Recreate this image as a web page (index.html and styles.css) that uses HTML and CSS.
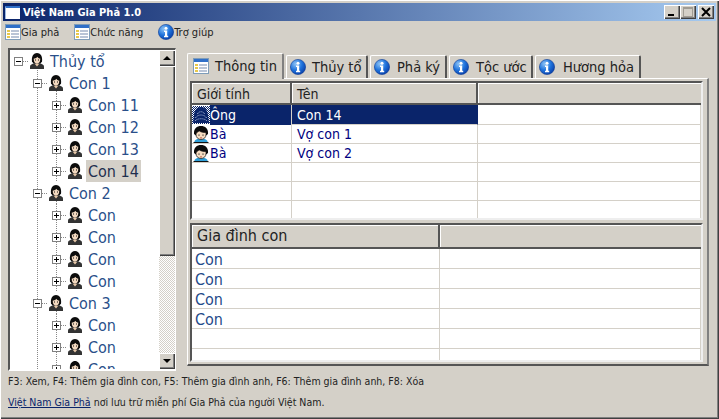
FILE: index.html
```html
<!DOCTYPE html>
<html lang="vi">
<head>
<meta charset="utf-8">
<title>Việt Nam Gia Phả 1.0</title>
<link rel="stylesheet" href="styles.css">
</head>
<body>
<svg class="defs" aria-hidden="true">
  <defs>
    <radialGradient id="ig" cx="35%" cy="30%" r="75%">
      <stop offset="0" stop-color="#8fc4f5"/><stop offset="0.55" stop-color="#1f73dc"/><stop offset="1" stop-color="#0a3fa8"/>
    </radialGradient>
    <symbol id="form" viewBox="0 0 16 16">
      <rect x="0.5" y="0.5" width="15" height="15" fill="#fff" stroke="#7f9db9"/>
      <rect x="1" y="1" width="14" height="3" fill="#2f6fc8"/>
      <rect x="2" y="6" width="3" height="2" fill="#e8c84a"/><rect x="2" y="9" width="3" height="2" fill="#e8c84a"/><rect x="2" y="12" width="3" height="2" fill="#e8c84a"/>
      <rect x="6" y="6" width="8" height="2" fill="#b9c4d6"/><rect x="6" y="9" width="8" height="2" fill="#b9c4d6"/><rect x="6" y="12" width="8" height="2" fill="#b9c4d6"/>
    </symbol>
    <symbol id="info" viewBox="0 0 16 16">
      <circle cx="8" cy="8" r="7.6" fill="url(#ig)" stroke="#0b3a96" stroke-width="0.6"/>
      <circle cx="8" cy="4.2" r="1.5" fill="#fff"/>
      <path d="M6 6.6h3.2v5.2h1v1.4H6v-1.4h1V8H6z" fill="#fff"/>
    </symbol>
    <symbol id="man" viewBox="0 0 16 16">
      <path d="M1 16v-2.500c0-1.800 2.200-2.600 4.500-3.200h5c2.300 .6 4.500 1.400 4.500 3.200V16z" fill="#333"/>
      <path d="M5.500 10.500h5L8 13.500z" fill="#e8c8a8"/>
      <path d="M3 8.500C2.200 2.800 5 0 8 0s5.800 2.800 5 8.500l-1.500 2H4.500z" fill="#0c0c0c"/>
      <path d="M4.800 5.500c1.600 0 3-.7 3.600-1.800 .5 1.200 1.500 1.800 2.800 1.800 .3 3-1.200 5.200-3.200 5.200S4.500 8.500 4.800 5.500z" fill="#f3d9c0"/>
      <rect x="6" y="6.500" width="1" height="1" fill="#111"/><rect x="9" y="6.500" width="1" height="1" fill="#111"/>
    </symbol>
    <symbol id="woman" viewBox="0 0 18 18">
      <path d="M2.500 18v-1.500c0-1.400 2.200-2.400 4.500-2.700h4c2.300 .3 4.500 1.300 4.500 2.700V18z" fill="#2f9fd8"/>
      <path d="M1.500 17.500h15" stroke="#111" stroke-width="1"/>
      <path d="M2 9C1.500 3.500 5 1 9 1s7.500 2.500 7 8l-2 1.500H4z" fill="#0c0c0c"/>
      <path d="M4 9.500c0-2 2-3 3.500-3.500 1.500 1.200 4 1.500 6.500 1.500v2c0 3-2.200 5-5 5s-5-2-5-5z" fill="#f6dcc0" stroke="#111" stroke-width="0.7"/>
      <rect x="6.500" y="9.500" width="1" height="1.200" fill="#111"/><rect x="10.500" y="9.500" width="1" height="1.200" fill="#111"/>
      <rect x="8" y="12.500" width="2" height="0.800" fill="#b04030"/>
    </symbol>
    <pattern id="dith" width="2" height="2" patternUnits="userSpaceOnUse">
      <rect width="2" height="2" fill="#0a246a"/><rect width="1" height="1" fill="#fff"/><rect x="1" y="1" width="1" height="1" fill="#fff"/>
    </pattern>
    <symbol id="man-sel" viewBox="0 0 18 18">
      <rect width="18" height="18" fill="url(#dith)"/>
      <path d="M9 1C4 1 2 6 2 10l-1 7h16l-1-7c0-4-2-9-7-9z" fill="#0a246a"/>
      <path d="M5.500 8c1-3 6-3 7 0M3.500 12c2-4 9-4 11 0M3 15c2-3 10-3 12 0" fill="none" stroke="#b9c6e4" stroke-width="1" stroke-dasharray="1 1"/>
    </symbol>
  </defs>
</svg>

<div class="window">
  <header class="titlebar">
    <span class="app-icon"></span>
    <span class="title">Việt Nam Gia Phả 1.0</span>
    <span class="winbtns">
      <span class="winbtn"><svg viewBox="0 0 16 14"><rect x="4" y="9" width="6" height="2" fill="#000"/></svg></span>
      <span class="winbtn gap"><svg viewBox="0 0 16 14"><rect x="3.500" y="2.500" width="9" height="9" fill="none" stroke="#a09c94"/><rect x="3" y="2" width="10" height="2" fill="#a09c94"/></svg></span>
      <span class="winbtn"><svg viewBox="0 0 16 14"><path d="M4 3l8 8M12 3l-8 8" stroke="#000" stroke-width="2"/></svg></span>
    </span>
  </header>

  <nav class="menubar">
    <span class="menu"><svg class="ic"><use href="#form"/></svg>Gia phả</span>
    <span class="menu"><svg class="ic"><use href="#form"/></svg>Chức năng</span>
    <span class="menu"><svg class="ic"><use href="#info"/></svg>Trợ giúp</span>
  </nav>

  <main class="main">
    <section class="treebox">
      <div class="tree">
        <div class="row lv0"><span class="exp"></span><span class="conn"></span><svg class="ic"><use href="#man"/></svg><span class="label root">Thủy tổ</span></div>
        <div class="row lv1"><span class="exp"></span><span class="conn"></span><svg class="ic"><use href="#man"/></svg><span class="label">Con 1</span></div>
        <div class="row lv2"><span class="exp plus"></span><span class="conn"></span><svg class="ic"><use href="#man"/></svg><span class="label">Con 11</span></div>
        <div class="row lv2"><span class="exp plus"></span><span class="conn"></span><svg class="ic"><use href="#man"/></svg><span class="label">Con 12</span></div>
        <div class="row lv2"><span class="exp plus"></span><span class="conn"></span><svg class="ic"><use href="#man"/></svg><span class="label">Con 13</span></div>
        <div class="row lv2"><span class="exp plus"></span><span class="conn"></span><svg class="ic"><use href="#man"/></svg><span class="label selected">Con 14</span></div>
        <div class="row lv1"><span class="exp"></span><span class="conn"></span><svg class="ic"><use href="#man"/></svg><span class="label">Con 2</span></div>
        <div class="row lv2"><span class="exp plus"></span><span class="conn"></span><svg class="ic"><use href="#man"/></svg><span class="label">Con</span></div>
        <div class="row lv2"><span class="exp plus"></span><span class="conn"></span><svg class="ic"><use href="#man"/></svg><span class="label">Con</span></div>
        <div class="row lv2"><span class="exp plus"></span><span class="conn"></span><svg class="ic"><use href="#man"/></svg><span class="label">Con</span></div>
        <div class="row lv2"><span class="exp plus"></span><span class="conn"></span><svg class="ic"><use href="#man"/></svg><span class="label">Con</span></div>
        <div class="row lv1"><span class="exp"></span><span class="conn"></span><svg class="ic"><use href="#man"/></svg><span class="label">Con 3</span></div>
        <div class="row lv2"><span class="exp plus"></span><span class="conn"></span><svg class="ic"><use href="#man"/></svg><span class="label">Con</span></div>
        <div class="row lv2"><span class="exp plus"></span><span class="conn"></span><svg class="ic"><use href="#man"/></svg><span class="label">Con</span></div>
        <div class="row lv2"><span class="exp plus"></span><span class="conn"></span><svg class="ic"><use href="#man"/></svg><span class="label">Con</span></div>
      </div>
      <div class="scrollbar">
        <span class="sbtn"><span class="arrow up"></span></span>
        <span class="thumb"></span>
        <span class="track"></span>
        <span class="sbtn"><span class="arrow down"></span></span>
      </div>
    </section>

    <section class="tabs">
      <div class="tabstrip">
        <span class="tab active t1"><svg class="ic"><use href="#form"/></svg>Thông tin</span>
        <span class="tab t2"><svg class="ic"><use href="#info"/></svg>Thủy tổ</span>
        <span class="tab t3"><svg class="ic"><use href="#info"/></svg>Phả ký</span>
        <span class="tab t4"><svg class="ic"><use href="#info"/></svg>Tộc ước</span>
        <span class="tab t5"><svg class="ic"><use href="#info"/></svg>Hương hỏa</span>
      </div>
      <div class="panel">
        <div class="list upper">
          <div class="lrow head"><span class="cell c1">Giới tính</span><span class="cell c2">Tên</span><span class="cell c3"></span></div>
          <div class="lrow sel"><span class="cell c1"><svg class="ic18"><use href="#man-sel"/></svg><span class="hl">Ông</span></span><span class="cell c2 hlcell">Con 14</span><span class="cell c3"></span></div>
          <div class="lrow"><span class="cell c1"><svg class="ic18"><use href="#woman"/></svg>Bà</span><span class="cell c2 t">Vợ con 1</span><span class="cell c3"></span></div>
          <div class="lrow"><span class="cell c1"><svg class="ic18"><use href="#woman"/></svg>Bà</span><span class="cell c2 t">Vợ con 2</span><span class="cell c3"></span></div>
          <div class="lrow"><span class="cell c1"></span><span class="cell c2"></span><span class="cell c3"></span></div>
          <div class="lrow"><span class="cell c1"></span><span class="cell c2"></span><span class="cell c3"></span></div>
          <div class="lrow"><span class="cell c1"></span><span class="cell c2"></span><span class="cell c3"></span></div>
        </div>
        <div class="list lower">
          <div class="lrow head"><span class="cell d1">Gia đình con</span><span class="cell c3"></span></div>
          <div class="lrow"><span class="cell d1">Con</span><span class="cell c3"></span></div>
          <div class="lrow"><span class="cell d1">Con</span><span class="cell c3"></span></div>
          <div class="lrow"><span class="cell d1">Con</span><span class="cell c3"></span></div>
          <div class="lrow"><span class="cell d1">Con</span><span class="cell c3"></span></div>
          <div class="lrow"><span class="cell d1"></span><span class="cell c3"></span></div>
          <div class="lrow"><span class="cell d1"></span><span class="cell c3"></span></div>
        </div>
      </div>
    </section>
  </main>

  <footer class="footer">
    <p class="keys">F3: Xem, F4: Thêm gia đình con, F5: Thêm gia đình anh, F6: Thêm gia đình anh, F8: Xóa</p>
    <p class="about"><a href="#">Việt Nam Gia Phả</a> nơi lưu trữ miễn phí Gia Phả của người Việt Nam.</p>
  </footer>
</div>
</body>
</html>
```

FILE: styles.css
```css
* { box-sizing: border-box; }
html, body { margin: 0; padding: 0; }
body { background: #d4d0c8; font-family: "DejaVu Sans Condensed", "DejaVu Sans", sans-serif; font-stretch: condensed; overflow: hidden; }
.defs { display: block; width: 0; height: 0; }
p { margin: 0; }

.window {
  width: 719px; height: 419px; padding: 3px;
  background: #d4d0c8;
  box-shadow: inset 1px 1px 0 #fff, inset -1px -1px 0 #404040, inset -2px -2px 0 #808080;
  display: flex; flex-direction: column;
}

.titlebar {
  height: 18px; flex: none; display: flex; align-items: center; padding: 0 2px;
  background: linear-gradient(90deg, #0a246a, #a6caf0);
  color: #fff; font-size: 11px; font-weight: 700;
}
.app-icon { width: 15px; height: 13px; background: #fff; border-top: 2px solid #2f6fc8; border-left: 1px solid #9db9e0; margin-right: 3px; }
.title { white-space: nowrap; }
.winbtns { margin-left: auto; display: flex; }
.winbtn {
  width: 16px; height: 14px; background: #d4d0c8; display: block;
  box-shadow: inset 1px 1px 0 #fff, inset -1px -1px 0 #404040, inset -2px -2px 0 #808080;
}
.winbtn svg { display: block; width: 16px; height: 14px; }
.winbtn.gap { margin-right: 2px; }

.menubar { height: 22px; flex: none; display: flex; align-items: center; padding-left: 2px; font-size: 11px; color: #222; }
.menu { display: flex; align-items: center; margin-right: 15px; }
.ic { width: 16px; height: 16px; flex: none; display: block; }
.ic18 { width: 18px; height: 18px; flex: none; display: block; }

.main { height: 323px; flex: none; margin: 5px 0 0 5px; display: flex; }

.treebox {
  width: 168px; flex: none; display: flex; background: #fff; overflow: hidden;
  border-top: 2px solid #555; border-left: 2px solid #555; border-right: 1px solid #fff; border-bottom: 2px solid #fff;
}
.tree { flex: 1; min-width: 0; overflow: hidden; }
.row {
  height: 22px; display: flex; align-items: center; font-size: 16px; color: #2a4f8a;
  background-repeat: no-repeat;
}
.lv0 { padding-left: 4px; background-image: linear-gradient(#888 50%, transparent 50%); background-size: 1px 2px; background-position: 27px 20px; }
.lv1 {
  padding-left: 23px;
  background-image: repeating-linear-gradient(#888 0 1px, transparent 1px 2px), repeating-linear-gradient(#888 0 1px, transparent 1px 2px);
  background-size: 1px 100%, 1px 3px; background-position: 27px 0, 46px 19px;
}
.lv2 {
  padding-left: 42px;
  background-image: repeating-linear-gradient(#888 0 1px, transparent 1px 2px), repeating-linear-gradient(#888 0 1px, transparent 1px 2px);
  background-size: 1px 100%, 1px 100%; background-position: 27px 0, 46px 0;
}
.exp {
  width: 9px; height: 9px; flex: none; border: 1px solid #808080;
  background: #fff linear-gradient(#000, #000) center / 5px 1px no-repeat;
}
.exp.plus { background: linear-gradient(#000, #000) center / 1px 5px no-repeat, #fff linear-gradient(#000, #000) center / 5px 1px no-repeat; }
.conn { width: 6px; height: 1px; flex: none; background: repeating-linear-gradient(90deg, #888 0 1px, transparent 1px 2px); }
.label { margin-left: 5px; padding: 2px 3px 0 0; white-space: nowrap; line-height: 20px; height: 22px; }
.selected { background: #d4d0c8; color: #1f2f4f; margin-left: 3px; padding: 2px 2px 0 2px; }

.scrollbar { width: 16px; flex: none; display: flex; flex-direction: column; margin-right: 0; }
.sbtn {
  height: 16px; flex: none; background: #d4d0c8; display: flex; align-items: center; justify-content: center;
  box-shadow: inset 1px 1px 0 #fff, inset -1px -1px 0 #404040, inset -2px -2px 0 #808080;
}
.arrow { width: 0; height: 0; border-left: 4px solid transparent; border-right: 4px solid transparent; }
.arrow.up { border-bottom: 4px solid #000; }
.arrow.down { border-top: 4px solid #000; }
.thumb {
  height: 190px; flex: none; background: #d4d0c8;
  box-shadow: inset 1px 1px 0 #fff, inset -1px -1px 0 #404040, inset -2px -2px 0 #808080;
}
.track { flex: 1; background: conic-gradient(#d4d0c8 25%, #fff 0 50%, #d4d0c8 0 75%, #fff 0) 0 0 / 2px 2px; }

.tabs { width: 522px; flex: none; margin: 5px 0 0 11px; display: flex; flex-direction: column; }
.tabstrip { height: 25px; flex: none; display: flex; align-items: flex-end; font-size: 14.500px; color: #222; position: relative; z-index: 1; }
.tab {
  height: 23px; display: flex; align-items: center; gap: 6px; padding-left: 3px; white-space: nowrap; margin-right: 2px;
  border-top: 1px solid #fff; border-left: 1px solid #fff; border-right: 2px solid #555; border-radius: 2px 2px 0 0;
  background: #d4d0c8;
}
.tab.active { height: 26px; margin-bottom: -1px; margin-right: 2px; padding: 0 0 1px 5px; gap: 6px; border-right: 2px solid #808080; }
.t1 { width: 97px; }
.t2 { width: 82px; }
.t3 { width: 77px; gap: 7px; }
.t4 { width: 84px; gap: 7px; }
.t5 { width: 106px; margin-right: 0; gap: 8px; }

.panel {
  height: 288px; flex: none; padding: 2px 4px 0 2px; display: flex; flex-direction: column; gap: 3px;
  border-top: 1px solid #fff; border-left: 1px solid #fff; border-right: 2px solid #808080; border-bottom: 2px solid #555;
}
.list {
  height: 139px; flex: none; background: #fff; overflow: hidden;
  border-top: 2px solid #555; border-left: 2px solid #555; border-right: 2px solid #eee; border-bottom: 2px solid #eee;
}
.lrow { display: flex; color: #1f4a8a; }
.cell { display: flex; align-items: center; white-space: nowrap; border-right: 1px solid #d4d0c8; border-bottom: 1px solid #d4d0c8; }
.c1 { width: 100px; flex: none; }
.c2 { width: 186px; flex: none; padding-left: 5px; }
.c3 { flex: 1; }
.d1 { width: 248px; flex: none; padding: 1px 0 0 3px; }
.upper .lrow { height: 19px; font-size: 14px; color: #000080; }
.upper .head { height: 22px; }
.lower .lrow { height: 20px; font-size: 16px; color: #1f4a8a; }
.lower .head { height: 24px; }
.lrow.head { color: #222; background: #d4d0c8; border-bottom: 2px solid #555; }
.head .cell { border-bottom: 0; border-right: 2px solid #555; box-shadow: inset 1px 1px 0 #fff; padding: 2px 0 0 5px; }
.lower .head .cell { padding: 0 0 1px 5px; }
.head .c3 { border-right: 0; }
.upper .lrow.sel { height: 20px; }
.sel .c1 { border-bottom: 0; }
.hl { background: #0a246a; color: #fff; flex: 1; height: 100%; display: flex; align-items: center; }
.hlcell { background: #0a246a; color: #fff; border-right: 1px solid #0a246a; }
.t { color: #000080; }

.footer { font-size: 10.500px; color: #222; padding: 0 0 0 5px; }
.keys { height: 21px; line-height: 21px; }
.about { height: 21px; line-height: 21px; }
.about a { color: #0a246a; }
```
